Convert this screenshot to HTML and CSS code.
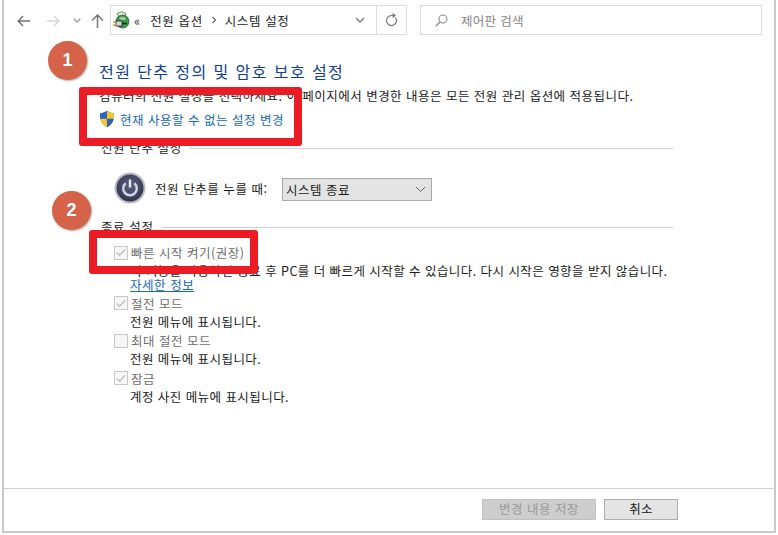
FILE: index.html
```html
<!DOCTYPE html>
<html lang="ko">
<head>
<meta charset="utf-8">
<title>시스템 설정</title>
<link rel="stylesheet" href="styles.css">
</head>
<body>
<div class="window">
  <div class="toolbar">
    <div class="nav">
      <svg class="nav-back" width="13" height="12" viewBox="0 0 13 12"><path d="M6 1 1.200 6 6 11M1.500 6H13" fill="none" stroke="#757575" stroke-width="1.500"/></svg>
      <svg class="nav-fwd" width="13" height="12" viewBox="0 0 13 12"><path d="M7 1l4.800 5L7 11M11.500 6H0" fill="none" stroke="#d6d6d6" stroke-width="1.500"/></svg>
      <svg class="nav-down" width="8" height="5" viewBox="0 0 8 5"><path d="M.7.700 4 4l3.300-3.300" fill="none" stroke="#9a9a9a" stroke-width="1.300"/></svg>
      <svg class="nav-up" width="13" height="14" viewBox="0 0 13 14"><path d="M1 6.500 6.500 1 12 6.500M6.500 1.500V14" fill="none" stroke="#757575" stroke-width="1.500"/></svg>
    </div>
    <div class="address">
      <svg class="addr-icon" width="17" height="19" viewBox="0 0 17 19"><path d="M4 2.500 8.500 .8 13 2.500 11 6H6z" fill="#eef3ea" stroke="#4c6b48" stroke-width=".8"/><circle cx="9.500" cy="10.500" r="6.500" fill="#3f9a4c" stroke="#1f5f2c" stroke-width=".8"/><path d="M6 7c2-1.500 5-1.500 7 0-1 3-5 3-7 0z" fill="#9fd39a"/><rect x="3" y="10" width="6" height="5" fill="#d8d8d8" stroke="#222" stroke-width=".8"/><path d="M0 11h3M0 14h3" stroke="#c9a021" stroke-width="1.300"/><path d="M9 12.500h5" stroke="#10301a" stroke-width="1.600"/></svg>
      <span class="crumb-more">«</span>
      <span class="crumb">전원 옵션</span>
      <svg class="crumb-sep" width="6" height="8" viewBox="0 0 6 8"><path d="M1.500 1l3 3-3 3" fill="none" stroke="#666" stroke-width="1.200"/></svg>
      <span class="crumb">시스템 설정</span>
      <svg class="addr-drop" width="10" height="6" viewBox="0 0 10 6"><path d="M1 1l4 4 4-4" fill="none" stroke="#777" stroke-width="1.300"/></svg>
      <div class="refresh"><svg width="13" height="14" viewBox="0 0 13 14"><path d="M10.500 4.500A5 5 0 1 1 6.500 2.500H9" fill="none" stroke="#777" stroke-width="1.200"/><path d="M7.500 .5 10 2.500 7.500 4.500" fill="none" stroke="#777" stroke-width="1.200"/></svg></div>
    </div>
    <div class="search">
      <svg width="13" height="13" viewBox="0 0 13 13"><circle cx="8" cy="5" r="4" fill="none" stroke="#8c8c8c" stroke-width="1.100"/><path d="M5 8 .8 12.300" stroke="#8c8c8c" stroke-width="1.300"/></svg>
      <span>제어판 검색</span>
    </div>
  </div>

  <div class="content">
    <h1 class="title">전원 단추 정의 및 암호 보호 설정</h1>
    <p class="intro">컴퓨터의 전원 설정을 선택하세요. 이 페이지에서 변경한 내용은 모든 전원 관리 옵션에 적용됩니다.</p>
    <a class="change-link">
      <svg width="16" height="18" viewBox="0 0 16 18"><path d="M8 .8c2 1.500 4 2.200 7 2.400 0 6-1.500 11-7 14C2.500 14.200 1 9.200 1 3.200 4 3 6 2.300 8 .8z" fill="#1f4fa8"/><path d="M8 .8v8H1c-.1-1.900 0-3.700 0-5.600C4 3 6 2.300 8 .8z" fill="#2a66c8"/><path d="M8 8.800h6.700c-.6 3.600-2.600 6.500-6.700 8.400z" fill="#2a62bd"/><path d="M8 .8c2 1.500 4 2.200 7 2.400 0 1.900.1 3.700-.3 5.600H8zM1 8.800h7v8.400c-4-1.900-6.300-4.800-7-8.400z" fill="#f3c829"/></svg>
      <span>현재 사용할 수 없는 설정 변경</span>
    </a>

    <div class="section-head section-power"><span>전원 단추 설정</span><i></i></div>
    <div class="power-row">
      <svg class="power-icon" width="32" height="32" viewBox="0 0 32 32">
        <defs>
          <radialGradient id="pw" cx="50%" cy="40%" r="60%"><stop offset="0" stop-color="#5d5f7d"/><stop offset=".75" stop-color="#40425c"/><stop offset="1" stop-color="#2f3046"/></radialGradient>
        </defs>
        <circle cx="16" cy="16" r="15.500" fill="#b9bac4"/>
        <circle cx="16" cy="16" r="13.500" fill="url(#pw)"/>
        <path d="M11.700 11.200a6.800 6.800 0 1 0 8.600 0" fill="none" stroke="#cfd6ec" stroke-width="2.400"/>
        <path d="M16 7.500v8" stroke="#e6eaf8" stroke-width="2.400"/>
      </svg>
      <label class="power-label">전원 단추를 누를 때:</label>
      <div class="select"><span>시스템 종료</span><svg width="11" height="7" viewBox="0 0 11 7"><path d="M1 1l4.500 4.500L10 1" fill="none" stroke="#666" stroke-width="1"/></svg></div>
    </div>

    <div class="section-head section-off"><span>종료 설정</span><i></i></div>
    <div class="options">
      <div class="option option-fast">
        <div class="opt-title"><span class="check on"><svg width="13" height="13" viewBox="0 0 13 13"><path d="M2 6.500l3 3L11 3" fill="none" stroke="#bdbdbd" stroke-width="1.300"/></svg></span>빠른 시작 켜기(권장)</div>
        <div class="opt-desc">이 기능을 사용하면 종료 후 PC를 더 빠르게 시작할 수 있습니다. 다시 시작은 영향을 받지 않습니다.</div>
        <div class="opt-more"><a class="more">자세한 정보</a></div>
      </div>
      <div class="option">
        <div class="opt-title"><span class="check on"><svg width="13" height="13" viewBox="0 0 13 13"><path d="M2 6.500l3 3L11 3" fill="none" stroke="#bdbdbd" stroke-width="1.300"/></svg></span>절전 모드</div>
        <div class="opt-desc">전원 메뉴에 표시됩니다.</div>
      </div>
      <div class="option">
        <div class="opt-title"><span class="check"></span>최대 절전 모드</div>
        <div class="opt-desc">전원 메뉴에 표시됩니다.</div>
      </div>
      <div class="option">
        <div class="opt-title"><span class="check on"><svg width="13" height="13" viewBox="0 0 13 13"><path d="M2 6.500l3 3L11 3" fill="none" stroke="#bdbdbd" stroke-width="1.300"/></svg></span>잠금</div>
        <div class="opt-desc">계정 사진 메뉴에 표시됩니다.</div>
      </div>
    </div>
  </div>

  <div class="footer">
    <button class="btn btn-disabled">변경 내용 저장</button>
    <button class="btn">취소</button>
  </div>
</div>

<div class="mark mark-box1"></div>
<div class="mark mark-box2"></div>
<div class="badge badge-1">1</div>
<div class="badge badge-2">2</div>
</body>
</html>
```
FILE: styles.css
```css
* { box-sizing: border-box; }
html, body { margin: 0; height: 100%; background: #fff; }
body {
  position: relative;
  width: 778px;
  height: 535px;
  overflow: hidden;
  padding: 0 2px 2px 2px;
  font-family: "Noto Sans CJK KR", "Noto Sans", sans-serif;
  font-size: 12.5px;
  color: #1a1a1a;
}
.window {
  height: 100%;
  border: 2px solid #c9c9c9;
  border-top: 0;
  display: flex;
  flex-direction: column;
  background: #fff;
}
.toolbar {
  display: flex;
  align-items: flex-start;
  padding: 5px 0 0 11px;
  height: 34px;
}
.nav { display: flex; align-items: center; width: 95px; height: 30px; padding-top: 1px; }
.nav-back { margin-left: 2px; }
.nav-fwd { margin-left: 17px; }
.nav-down { margin-left: 13px; }
.nav-up { margin-left: 10px; }
.address {
  width: 297px;
  height: 30px;
  border: 1px solid #dcdcdc;
  display: flex;
  align-items: center;
  padding-left: 2px;
}
.addr-icon { margin-right: 4px; }
.crumb-more { font-size: 13px; margin-right: 10px; line-height: 1; color: #333; }
.crumb { letter-spacing: .6px; color: #222; }
.crumb-sep { margin: 0 8px; }
.addr-drop { margin-left: auto; margin-right: 11px; }
.refresh {
  width: 30px;
  height: 100%;
  border-left: 1px solid #dcdcdc;
  display: flex;
  align-items: center;
  justify-content: center;
}
.search {
  width: 342px;
  height: 30px;
  margin-left: 13px;
  border: 1px solid #dcdcdc;
  display: flex;
  align-items: center;
  gap: 13px;
  padding-left: 14px;
  color: #858585;
  letter-spacing: .3px;
}
.content { flex: 1; padding: 0 0 0 95px; }
.title {
  margin: 27px 0 0;
  font-size: 16px;
  font-weight: 400;
  line-height: 20px;
  color: #0f3f8f;
  letter-spacing: 1.42px;
  white-space: nowrap;
}
.intro { margin: 6px 0 0; line-height: 18px; letter-spacing: .47px; white-space: nowrap; }
.change-link { display: flex; align-items: center; gap: 5px; margin-top: 4px; height: 20px; color: #1668b5; letter-spacing: .5px; }
.section-head { display: flex; align-items: center; gap: 8px; width: 572px; line-height: 16px; margin-left: 2px; letter-spacing: .6px; }
.section-head i { flex: 1; height: 1px; background: #cfcfcf; }
.section-power { margin-top: 11px; }
.section-off { margin-top: 15px; }
.power-row { display: flex; align-items: center; margin: 16px 0 0 15px; height: 32px; }
.power-label { margin-left: 9px; letter-spacing: .55px; width: 127px; white-space: nowrap; }
.select {
  width: 150px;
  height: 23px;
  margin-top: 3px;
  background: #e3e3e3;
  border: 1px solid #a9a9a9;
  display: flex;
  align-items: center;
  justify-content: space-between;
  padding: 0 3px 0 3px;
  letter-spacing: .5px;
}
.select svg { margin-right: 2px; }
.options { margin: 8px 0 0 15px; }
.option { margin-bottom: 1.500px; }
.option-fast { margin-bottom: 2.500px; }
.opt-title { display: flex; align-items: center; height: 19px; color: #6d6d6d; letter-spacing: .5px; white-space: nowrap; }
.check {
  width: 14px;
  height: 14px;
  border: 1px solid #c8c8c8;
  background: #f6f6f6;
  margin-right: 3px;
  display: flex;
  align-items: center;
  justify-content: center;
  flex: none;
}
.opt-desc { margin-left: 16px; height: 17px; line-height: 17px; letter-spacing: .44px; white-space: nowrap; }
.opt-more { margin-left: 16px; height: 12px; line-height: 12px; }
.more { color: #1668b5; text-decoration: underline; letter-spacing: .55px; }
.footer {
  height: 43px;
  border-top: 1px solid #cfcfcf;
  display: flex;
  align-items: flex-start;
  justify-content: flex-end;
  gap: 8px;
  padding: 10px 96px 0 0;
}
.btn {
  width: 74px;
  height: 21px;
  border: 1px solid #adadad;
  background: #e4e4e4;
  font: inherit;
  padding: 0;
  color: #1a1a1a;
  letter-spacing: .3px;
  line-height: 1;
}
.btn-disabled {
  width: 114px;
  background: #cdcdcd;
  border-color: #c2c2c2;
  color: #9a9a9a;
  letter-spacing: .5px;
}
.mark {
  position: absolute;
  border: 8px solid #ec1c24;
  border-radius: 3px;
}
.mark-box1 { left: 79px; top: 87px; width: 223px; height: 59px; }
.mark-box2 { left: 89px; top: 230px; width: 169px; height: 44px; }
.badge {
  position: absolute;
  width: 39px;
  height: 39px;
  border-radius: 50%;
  background: #d4634a;
  box-shadow: 1px 1px 2px rgba(90, 60, 50, .45);
  color: #fff;
  font-family: "Liberation Sans", sans-serif;
  font-weight: 700;
  font-size: 18px;
  line-height: 38px;
  text-align: center;
}
.badge-1 { left: 48px; top: 41px; }
.badge-2 { left: 52px; top: 191px; }
```
